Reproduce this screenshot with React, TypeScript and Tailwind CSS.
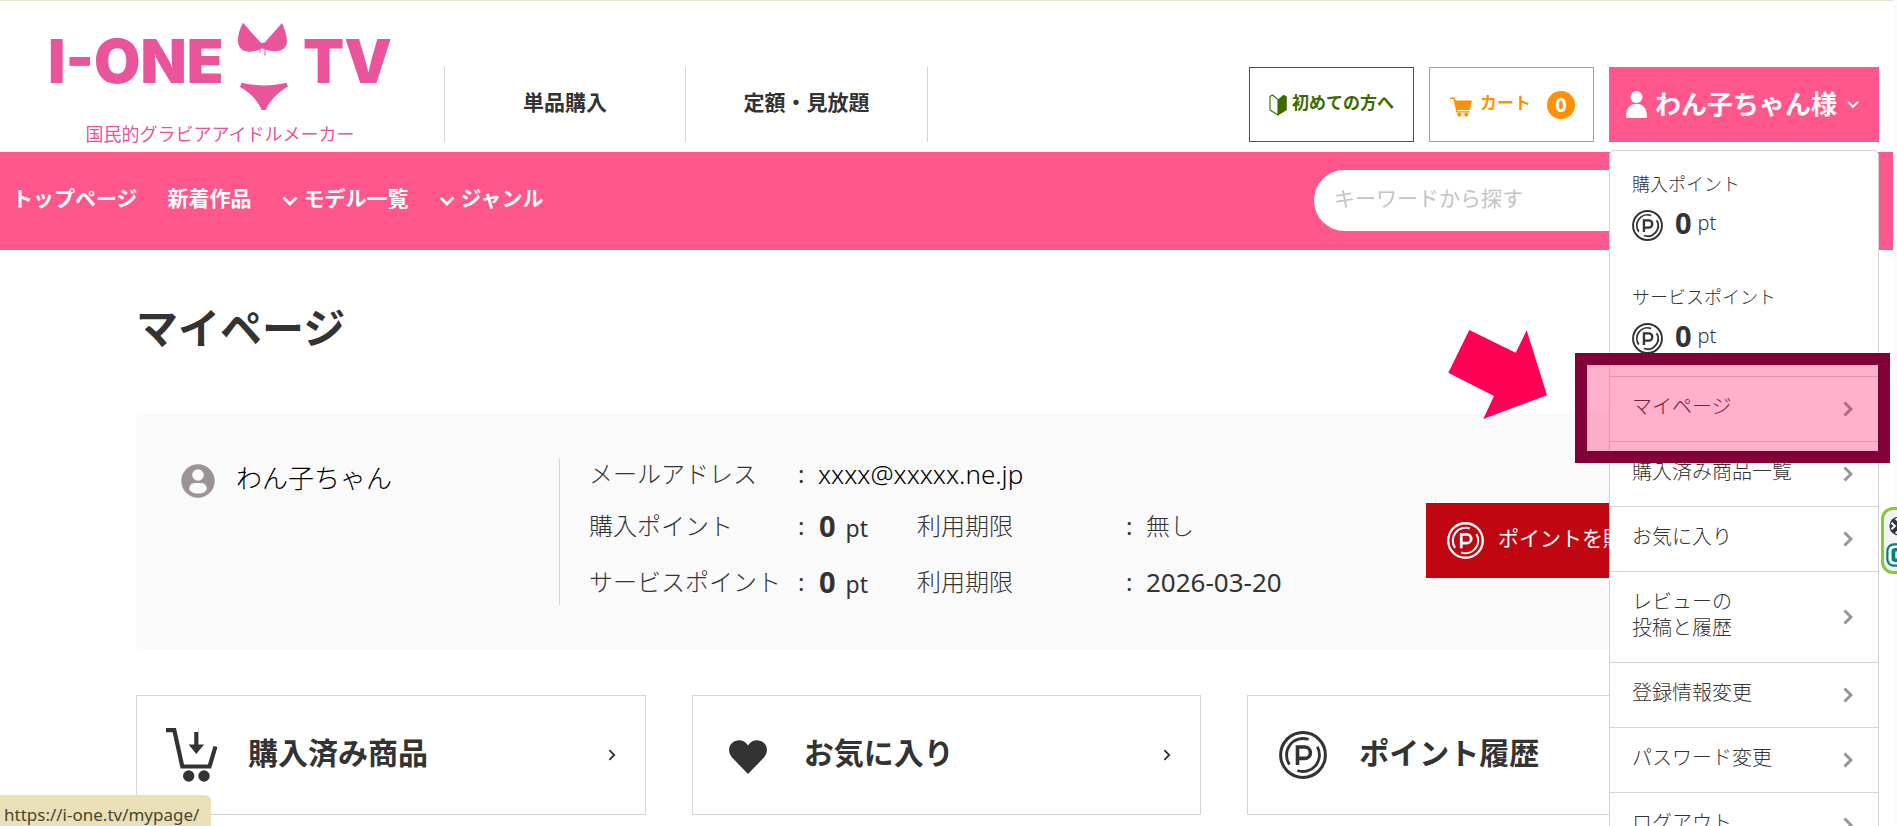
import React from "react";

function PointIcon({ className }: { className: string }) {
  return (
    <svg viewBox="0 0 48 48" fill="none" stroke="currentColor" className={className} aria-hidden="true">
      <circle cx="24" cy="24" r="22.4" strokeWidth="3" />
      <path d="M10.5 33.5A16.5 16.5 0 0 1 29.6 8.5" strokeWidth="2.8" />
      <path d="M38.3 15.8A16.5 16.5 0 0 1 18.4 39.5" strokeWidth="2.8" />
      <path d="M18.5 34V16h7.2a5.6 5.6 0 0 1 0 11.4h-7.2" strokeWidth="3.6" />
    </svg>
  );
}

function ChevronDown({ className }: { className: string }) {
  return (
    <svg viewBox="0 0 16 12" fill="none" stroke="currentColor" className={className} aria-hidden="true">
      <path d="M1.5 2.5 8 9l6.5-6.5" strokeWidth="2.8" />
    </svg>
  );
}

function ChevronRight({ className, width }: { className: string; width: number }) {
  return (
    <svg viewBox="0 0 10 16" fill="none" stroke="currentColor" strokeWidth={width} className={className} aria-hidden="true">
      <path d="M1.5 1.5 8 8l-6.5 6.5" />
    </svg>
  );
}

function Logo() {
  return (
    <a href="#top" className="flex w-[344px] shrink-0 flex-col text-[#e9549b]">
      <span className="flex h-[88px] justify-between font-[Inter] text-[60px] leading-[78px] font-black">
        <span>I-ONE</span>
        <svg viewBox="710 64 156 264" fill="currentColor" className="h-[88px] w-[52px]" aria-hidden="true">
          <path d="M728 66C718 84 712 104 713 122C714 144 728 154 750 153C764 152 775 149 785 143C797 149 810 152 824 152C848 152 859 140 860 122C859 104 853 84 845 67L794 125C788 128 784 128 780 125Z" />
          <path d="M779 145V156M794 145V165" stroke="currentColor" strokeWidth="3" />
          <path d="M724 246C768 257 814 257 858 246L863 257C830 279 808 300 797 328H784C774 302 750 276 719 259Z" />
        </svg>
        <span>TV</span>
      </span>
      <span className="pt-3 text-center text-[18px] leading-[24px]">国民的グラビアアイドルメーカー</span>
    </a>
  );
}

function PointBalance({ label }: { label: string }) {
  return (
    <div className="h-[113px] px-[22px]">
      <p className="text-[18px] leading-[26px] font-light">{label}</p>
      <p className="flex items-center pt-2">
        <PointIcon className="mt-1 size-[31px]" />
        <span className="pl-3 text-[29px] leading-9 font-bold">0</span>
        <span className="pl-[6px] text-[20px] leading-9 font-light">pt</span>
      </p>
    </div>
  );
}

const menuItems = ["マイページ", "購入済み商品一覧", "お気に入り", "レビューの\n投稿と履歴", "登録情報変更", "パスワード変更", "ログアウト"];

function Highlight() {
  return (
    <>
      <div className="pointer-events-none absolute -top-6 -right-3 -bottom-[22px] -left-[35px] z-10 border-12 border-[#820038]">
        <div className="size-full bg-[#ff0054]/31" />
      </div>
      <svg viewBox="0 0 100 90" className="pointer-events-none absolute -top-[47px] -left-[162px] h-[90px] w-[100px]" aria-hidden="true">
        <polygon points="21.3,0 67.7,22.7 78.7,0.3 99,65.3 35.3,89 46,66 0.3,42.7" fill="#ff0054" />
      </svg>
    </>
  );
}

function AccountMenu() {
  return (
    <div className="absolute top-[83px] right-0 left-0 rounded-[5px] border border-[#d5d5d5] bg-white pt-5 text-[#333]">
      <PointBalance label="購入ポイント" />
      <PointBalance label="サービスポイント" />
      <ul className="-mt-[21px]">
        {menuItems.map((item, i) => (
          <li key={item} className="relative border-t border-[#d5d5d5]">
            <a href="#menu" className="flex items-center justify-between pt-[17px] pr-[25px] pb-[21px] pl-[22px] text-[20px] leading-[26px] font-light">
              <span className="whitespace-pre-line">{item}</span>
              <ChevronRight className="mt-1 h-4 w-[10px] text-[#9c9494]" width={3} />
            </a>
            {i === 0 && <Highlight />}
          </li>
        ))}
      </ul>
    </div>
  );
}

function Header() {
  return (
    <header className="relative z-20 flex h-[152px] items-end border-t border-[#e8e2c8] pr-[14px] pb-[10px]">
      <div className="flex h-[120px] w-[444px] shrink-0 items-start pl-12">
        <Logo />
      </div>
      <nav className="flex divide-x divide-[#d5d5d5] border-x border-[#d5d5d5] text-[21px] font-bold">
        <a href="#single" className="flex h-[75px] w-[241px] items-center justify-center pb-1">単品購入</a>
        <a href="#plan" className="flex h-[75px] w-[241px] items-center justify-center pb-1">定額・見放題</a>
      </nav>
      <div className="ml-auto flex gap-[15px] font-bold">
        <a href="#guide" className="flex h-[75px] w-[165px] items-center justify-center gap-[5px] border border-[#3a6b00] pb-1 text-[17px] text-[#3a6b00]">
          <svg viewBox="0 0 18 22" className="mt-1 h-[22px] w-[18px]" aria-hidden="true">
            <path d="M1 2.5 3.5 1 9 5.5V21L1 16Z" fill="none" stroke="currentColor" strokeWidth="1.1" />
            <path d="M9 5.5 14.5.8 17.8 2.5V16L9 21.6Z" fill="currentColor" />
          </svg>
          初めての方へ
        </a>
        <a href="#cart" className="flex h-[75px] w-[165px] items-center border border-[#ff9100] pr-[18px] pl-5 text-[17px] text-[#ff9100]">
          <svg viewBox="0 0 22 20" fill="currentColor" className="mt-1 h-5 w-[22px]" aria-hidden="true">
            <path d="M0 .5H4.6L5.6 3.5H22L19.6 13H7.2V14.2H19.8V15.4H5.8V12.6L3.4 2H0Z" />
            <circle cx="9.3" cy="17.6" r="2.1" />
            <circle cx="16.3" cy="17.6" r="2.1" />
          </svg>
          <span className="pb-1 pl-2">カート</span>
          <span className="ml-auto flex size-7 items-center justify-center rounded-full bg-[#ff9100] text-[20px] leading-7 text-white">0</span>
        </a>
        <div className="relative w-[270px]">
          <button type="button" className="flex h-[75px] w-full items-center bg-[#ff568b] pl-[17px] text-[26px] font-bold text-white">
            <svg viewBox="0 0 21 27" fill="currentColor" className="h-[27px] w-[21px]" aria-hidden="true">
              <circle cx="10.5" cy="6" r="6" />
              <path d="M0 25.5C0 17 4.5 12.8 10.5 12.8S21 17 21 25.5Q21 27 19.5 27H1.5Q0 27 0 25.5Z" />
            </svg>
            <span className="pl-2">わん子ちゃん様</span>
            <ChevronDown className="ml-[10px] h-[9px] w-3" />
          </button>
          <AccountMenu />
        </div>
      </div>
    </header>
  );
}

function NavBar() {
  return (
    <div className="flex h-[98px] items-center bg-[#ff568b] pr-5 pb-[2px] text-white">
      <nav className="flex items-center gap-[30px] pb-[2px] pl-3 text-[21px] font-bold">
        <a href="#top">トップページ</a>
        <a href="#new">新着作品</a>
        <a href="#models" className="flex items-center gap-[6px]">
          <ChevronDown className="mt-1 h-3 w-4" />
          モデル一覧
        </a>
        <a href="#genres" className="flex items-center gap-[6px]">
          <ChevronDown className="mt-1 h-3 w-4" />
          ジャンル
        </a>
      </nav>
      <input
        type="search"
        aria-label="キーワードから探す"
        placeholder="キーワードから探す"
        className="ml-auto h-[61px] w-[559px] rounded-full bg-white px-5 pb-1 text-[21px] text-[#333] placeholder:text-[#c4c4c4]"
      />
    </div>
  );
}

function PointRow({ label, limit }: { label: string; limit: React.ReactNode }) {
  return (
    <div className="flex h-[56px] items-center">
      <dt className="w-[209px]">{label}</dt>
      <dd className="flex w-[119px] items-center">
        <span className="w-[21px] font-normal">:</span>
        <span className="text-[29px] font-bold">0</span>
        <span className="pt-1 pl-[10px] text-[23px] font-normal">pt</span>
      </dd>
      <dt className="w-[209px]">利用期限</dt>
      <dd className="flex">
        <span className="w-5 font-normal">:</span>
        {limit}
      </dd>
    </div>
  );
}

function Profile() {
  return (
    <section className="flex h-[237px] items-start rounded-md bg-[#fafafa] pt-[45px] pr-12 pl-[45px] text-[24px]">
      <div className="flex w-[378px] items-center text-[26px] leading-[36px] font-light text-black">
        <svg viewBox="0 0 34 34" className="mt-[6px] size-[34px]" aria-hidden="true">
          <circle cx="17" cy="17" r="16.7" fill="#9c9494" />
          <circle cx="17" cy="11" r="5.8" fill="#fafafa" />
          <path d="M8.2 25.5C8.2 21 11 19 14 19H20C23 19 25.8 21 25.8 25.5C24 28.5 20.5 29.6 17 29.6S10 28.5 8.2 25.5Z" fill="#fafafa" />
        </svg>
        <span className="pl-[21px]">わん子ちゃん</span>
      </div>
      <dl className="h-[147px] border-l border-[#d5d5d5] pl-[29px] leading-[32px] font-light">
        <div className="flex h-[40px] items-start">
          <dt className="w-[209px]">メールアドレス</dt>
          <dd className="flex">
            <span className="w-5 font-normal">:</span>
            <span className="text-[26px] text-black">xxxx@xxxxx.ne.jp</span>
          </dd>
        </div>
        <PointRow label="購入ポイント" limit="無し" />
        <PointRow label="サービスポイント" limit={<span className="text-[26px] font-normal">2026-03-20</span>} />
      </dl>
      <a href="#buy" className="mt-[45px] ml-auto flex h-[75px] w-[283px] items-center bg-[#c00711] pl-[21px] text-[21px] text-white">
        <PointIcon className="size-[37px]" />
        <span className="pb-1 pl-[14px] whitespace-nowrap">ポイントを購入する</span>
      </a>
    </section>
  );
}

function CartDownIcon() {
  return (
    <svg viewBox="0 0 52 54" className="h-[54px] w-[52px]" aria-hidden="true">
      <path d="M0 2.2H8.3L16.3 38.5H43.5L49.5 18.5" fill="none" stroke="currentColor" strokeWidth="4.2" />
      <path d="M28.2 0V4H32.2V0ZM28.2 0H32.4V16.5H38L30.3 26 22.6 16.5H28.2Z" fill="currentColor" />
      <circle cx="22.7" cy="48" r="5.7" fill="currentColor" />
      <circle cx="38" cy="48" r="5.7" fill="currentColor" />
    </svg>
  );
}

function HeartIcon() {
  return (
    <svg viewBox="0 0 38 34" fill="currentColor" className="mt-1 h-[34px] w-[38px]" aria-hidden="true">
      <path d="M19 34 3 17.5C-1 12.5-.8 6.5 3 3C7.8-1.4 15.5-.7 19 5.5C22.5-.7 30.2-1.4 35 3C38.8 6.5 39 12.5 35 17.5Z" />
    </svg>
  );
}

function Card({ icon, label }: { icon: React.ReactNode; label: string }) {
  return (
    <a href="#card" className="flex h-[120px] items-center border border-[#d5d5d5] pr-[29px] pl-[28px]">
      <span className="flex w-[54px] items-center justify-center">{icon}</span>
      <span className="pb-[6px] pl-[29px] text-[30px] font-bold">{label}</span>
      <ChevronRight className="ml-auto h-3 w-2" width={2.4} />
    </a>
  );
}

function SideWidget() {
  return (
    <div className="fixed top-[507px] -right-4 z-30 flex h-[67px] w-8 flex-col gap-[7px] rounded-xl border-3 border-[#8cc63f] bg-[#f2f2f2] pt-[6px] pl-[2px]">
      <svg viewBox="0 0 24 24" className="ml-[3px] size-5 shrink-0" aria-hidden="true">
        <circle cx="12" cy="12" r="11.5" fill="#2f333a" />
        <path d="M3 8 7 12 3 16M8 3l4 4 4-4M8 21l4-4 4 4" fill="none" stroke="#f2f2f2" strokeWidth="2.6" />
      </svg>
      <svg viewBox="0 0 26 26" className="size-6 shrink-0" aria-hidden="true">
        <rect x="1.5" y="1.5" width="23" height="23" rx="7" fill="#fff" stroke="#008080" strokeWidth="2.4" />
        <rect x="6" y="5.5" width="15" height="15" rx="4" fill="#008080" />
        <path d="M16 10h-5v6h5M11 13h4" fill="none" stroke="#fff" strokeWidth="1.8" />
      </svg>
    </div>
  );
}

export default function App() {
  return (
    <div
      id="top"
      className="h-screen overflow-hidden border-r-4 border-[#fbfbfb] bg-white font-['Noto_Sans','Noto_Sans_CJK_JP',sans-serif] text-[#333]"
    >
      <Header />
      <NavBar />
      <main className="px-[136px] pt-12">
        <h1 className="text-[42px] leading-[60px] font-bold">マイページ</h1>
        <div className="pt-[55px]">
          <Profile />
        </div>
        <div className="grid grid-cols-3 gap-[46px] pt-[45px]">
          <Card icon={<CartDownIcon />} label="購入済み商品" />
          <Card icon={<HeartIcon />} label="お気に入り" />
          <Card icon={<PointIcon className="size-12" />} label="ポイント履歴" />
        </div>
      </main>
      <SideWidget />
      <div className="fixed bottom-0 left-0 z-30 h-[31px] rounded-tr-md bg-[#e9e0b8] pt-2 pr-3 pl-1 text-[17px] leading-6 text-[#4a4630]">
        https://i-one.tv/mypage/
      </div>
    </div>
  );
}
